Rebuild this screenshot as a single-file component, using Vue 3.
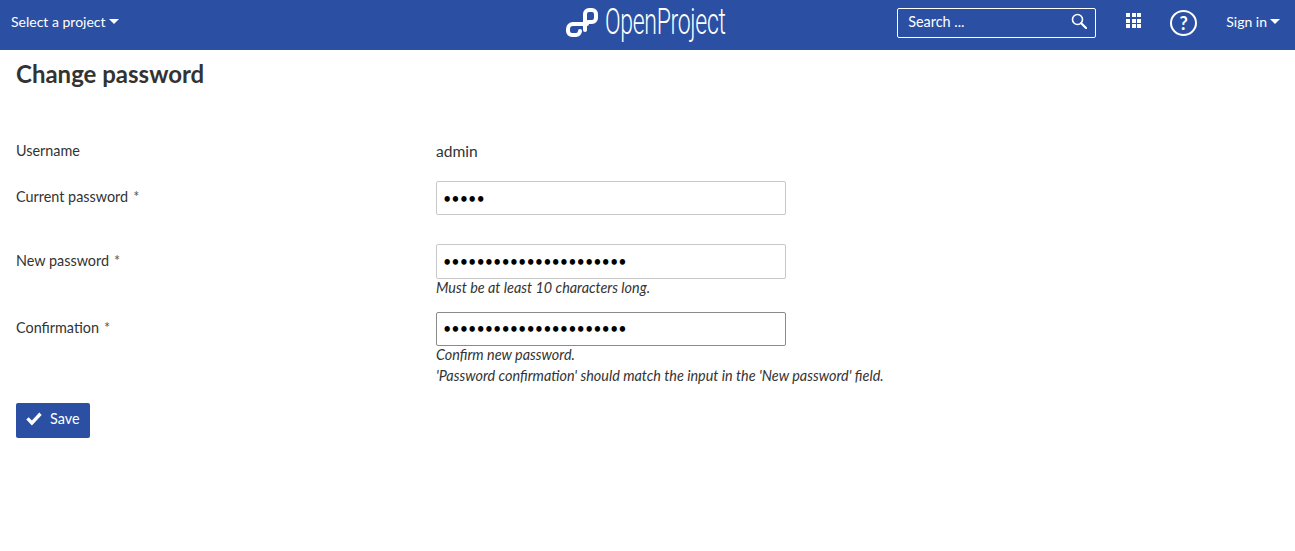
<script setup>
const fields = [
  { key: 'current', label: 'Current password', value: 'admin', notes: [] },
  { key: 'new', label: 'New password', value: 'aaaaaaaaaaaaaaaaaaaaaa', notes: ['Must be at least 10 characters long.'] },
  {
    key: 'confirm',
    label: 'Confirmation',
    value: 'aaaaaaaaaaaaaaaaaaaaaa',
    focused: true,
    notes: ['Confirm new password.', "'Password confirmation' should match the input in the 'New password' field."]
  }
]
</script>

<template>
  <div class="page">
    <header class="topbar">
      <div class="side left">
        <a class="nav-link">Select a project<span class="caret"></span></a>
      </div>
      <div class="logo">
        <svg width="32" height="30" viewBox="0 0 32 30" fill="none" stroke="#fff" stroke-width="4" stroke-linecap="round">
          <path d="M19 23V7a4 4 0 0 1 4-4h3a4 4 0 0 1 4 4v4a4 4 0 0 1-4 4h-4" />
          <path d="M21 17H7a5 5 0 0 0-5 5v2a4 4 0 0 0 4 4h4a4 4 0 0 0 4-4" />
        </svg>
        <span class="logo-text">OpenProject</span>
      </div>
      <div class="side right">
        <div class="search">
          <span>Search ...</span>
          <svg width="16" height="16" viewBox="0 0 16 16" fill="none" stroke="#fff">
            <circle cx="6.5" cy="6.5" r="5" stroke-width="1.6" />
            <path d="M10.2 10.2 15 15" stroke-width="2.2" stroke-linecap="round" />
          </svg>
        </div>
        <div class="grid-icon">
          <i v-for="n in 9" :key="n"></i>
        </div>
        <div class="help">?</div>
        <a class="nav-link">Sign in<span class="caret"></span></a>
      </div>
    </header>

    <main class="content">
      <h1>Change password</h1>
      <form class="form" @submit.prevent>
        <div class="row first">
          <label>Username</label>
          <div class="field plain">admin</div>
        </div>
        <div v-for="f in fields" :key="f.key" class="row" :class="f.key">
          <label>{{ f.label }}<span class="req">*</span></label>
          <div class="field">
            <input type="password" :value="f.value" :class="{ focused: f.focused }" readonly />
            <p v-for="note in f.notes" :key="note" class="note">{{ note }}</p>
          </div>
        </div>
        <button class="save" type="submit">
          <svg width="16" height="14" viewBox="0 0 16 14" fill="#fff">
            <path d="M0.3 7.6 2.6 5.2 5.9 8.6 13.3 0.6 15.7 3 5.9 13.4Z" />
          </svg>
          <span>Save</span>
        </button>
      </form>
    </main>
  </div>
</template>

<style scoped>
.page {
  width: 1295px;
  height: 551px;
  overflow: hidden;
  background: #fff;
  font-family: Lato, "Liberation Sans", sans-serif;
  font-size: 14.4px;
  color: #333;
}
.topbar {
  height: 50px;
  background: #2b50a3;
  color: #fff;
  display: grid;
  grid-template-columns: 1fr auto 1fr;
  align-items: center;
  padding-bottom: 7px;
  box-sizing: border-box;
}
.side { display: flex; align-items: center; }
.left { padding-left: 11px; }
.right { justify-content: flex-end; padding-right: 15px; }
.nav-link { display: flex; align-items: center; font-size: 14px; color: #fff; }
.caret {
  margin-left: 3px;
  border-left: 5px solid transparent;
  border-right: 5px solid transparent;
  border-top: 5px solid #fff;
}
.logo { display: flex; align-items: center; gap: 7px; margin-right: 4px; }
.logo-text {
  display: inline-block;
  width: 121px;
  font-family: Roboto, sans-serif;
  font-weight: 300;
  font-size: 36px;
  line-height: 30px;
  letter-spacing: -0.5px;
  white-space: nowrap;
  transform: scaleX(0.64);
  transform-origin: left center;
}
.search {
  width: 199px;
  height: 30px;
  box-sizing: border-box;
  border: 1px solid #fff;
  border-radius: 2px;
  margin-top: 2px;
  padding: 0 8px 3px 10px;
  display: flex;
  align-items: center;
  justify-content: space-between;
  font-size: 14.4px;
}
.grid-icon {
  margin-left: 30px;
  margin-bottom: 2px;
  width: 15px;
  display: grid;
  grid-template-columns: repeat(3, 4px);
  gap: 1.5px;
}
.grid-icon i { height: 4px; background: #fff; }
.help {
  margin-left: 29px;
  margin-right: 29px;
  margin-top: 3px;
  width: 27px;
  height: 26px;
  box-sizing: border-box;
  border: 2px solid #fff;
  border-radius: 50%;
  text-align: center;
  font-size: 18px;
  font-weight: 700;
  line-height: 22px;
}
.content { padding: 0 16px; }
h1 {
  margin: 0;
  padding-top: 8px;
  font-size: 24px;
  line-height: 32px;
  font-weight: 700;
  color: #333;
}
.form { padding-top: 41px; }
.row {
  display: grid;
  grid-template-columns: 420px 350px;
}
.row label { line-height: 20px; padding-top: 7px; }
.req { margin-left: 5px; color: #555; }
.first { height: 50px; }
.first label { padding-top: 10px; }
.plain { font-size: 15.6px; line-height: 20px; padding-top: 10px; }
.current { height: 63px; }
.current label, .confirm label { padding-top: 6px; }
.new { height: 68px; }
.confirm { height: 91px; }
.field input {
  display: block;
  width: 350px;
  height: 34px;
  box-sizing: border-box;
  border: 1px solid #c8c8c8;
  border-radius: 2px;
  padding: 0 6px;
  font-family: Lato, sans-serif;
  font-size: 14.4px;
  color: #000;
  background: #fff;
  outline: none;
}
.new input { height: 35px; }
.field input.focused { border-color: #8a8a8a; padding-bottom: 2px; }
.note {
  margin: 0;
  font-size: 14.4px;
  font-style: italic;
  line-height: 21px;
  color: #333;
  white-space: nowrap;
}
.field input + .note { margin-top: -2px; }
.save {
  width: 74px;
  height: 35px;
  border: none;
  border-radius: 2px;
  background: #2b50a3;
  color: #fff;
  display: flex;
  align-items: center;
  gap: 8px;
  padding: 0 0 0 10px;
  font-family: Lato, sans-serif;
  font-size: 14.4px;
}
.save span { margin-bottom: 5px; }
.save svg { margin-bottom: 3px; }
</style>
